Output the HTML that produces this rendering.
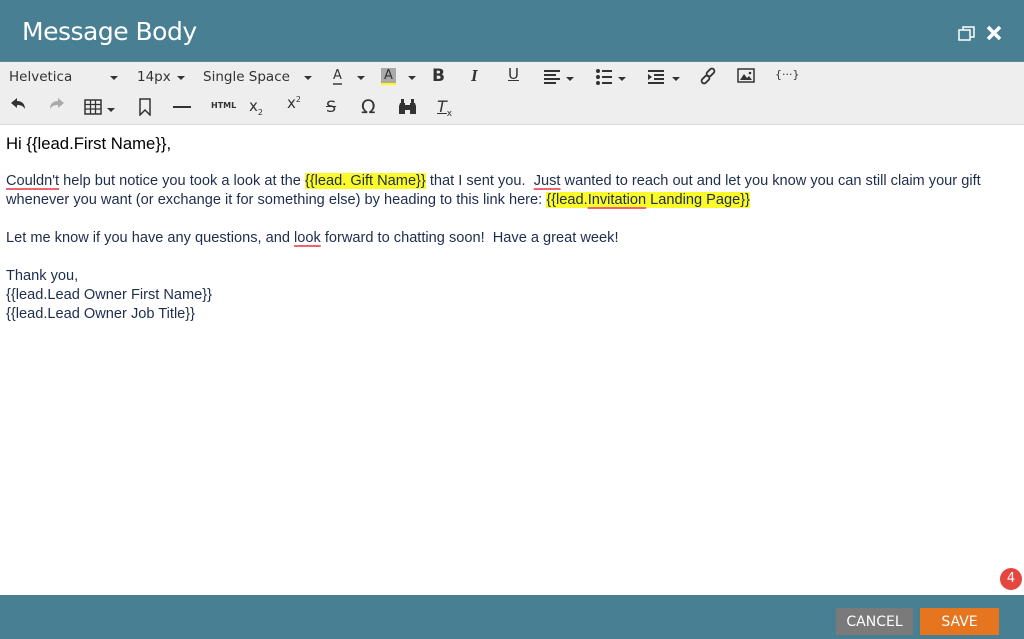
<!DOCTYPE html>
<html><head><style>
*{margin:0;padding:0;box-sizing:border-box}
body{width:1024px;height:639px;overflow:hidden;background:#fff;font-family:"Liberation Sans",sans-serif;position:relative}
.hdr{position:absolute;left:0;top:0;width:1024px;height:61px;background:#487f92}
.hdr .t{position:absolute;left:22px;top:17px;color:#fff;font-size:25px;font-family:"DejaVu Sans","Liberation Sans",sans-serif;font-weight:normal;letter-spacing:-0.5px}
.tb{position:absolute;left:0;top:61px;width:1024px;height:64px;background:#eeeeee;border-bottom:1px solid #dcdcdc;border-top:1px solid #5a8a9a}
.tb span{position:absolute;color:#333;font-family:"DejaVu Sans",sans-serif;font-size:13.5px}
.car{display:inline-block;width:0;height:0;border-left:4px solid transparent;border-right:4px solid transparent;border-top:4px solid #333;position:absolute}
.txt{position:absolute;left:6px;top:134px;font-size:14.6px;line-height:19px;color:#1f2d4d;width:1000px}
.hl{background:#fbfb2a}
.sp{text-decoration:underline;text-decoration-color:#f06470;text-decoration-thickness:2px;text-underline-offset:3px}
.ftr{position:absolute;left:0;top:595px;width:1024px;height:44px;background:#487f92}
.btn{position:absolute;top:608px;height:27px;color:#fff;font-size:14px;font-family:"DejaVu Sans",sans-serif;text-align:center;line-height:28px}
</style></head><body>
<div class="hdr"><div class="t">Message Body</div>
<svg style="position:absolute;left:958px;top:25px" width="18" height="18" viewBox="0 0 18 18" fill="none" stroke="#fff" stroke-width="1.5"><rect x="1" y="5" width="11" height="10"/><path d="M5 5V2h11v10h-4"/></svg>
<svg style="position:absolute;left:986px;top:25px" width="16" height="16" viewBox="0 0 16 16" stroke="#fff" stroke-width="3.5"><path d="M2 2l12 12M14 2L2 14"/></svg>
</div>
<div class="tb">
<span style="left:9px;top:7px">Helvetica</span><i class="car" style="left:110px;top:14px"></i>
<span style="left:137px;top:7px">14px</span><i class="car" style="left:177px;top:14px"></i>
<span style="left:203px;top:7px">Single Space</span><i class="car" style="left:304px;top:14px"></i>
<span style="left:333px;top:6px;font-size:13px;border-bottom:2px solid #666;line-height:15px">A</span><i class="car" style="left:357px;top:14px"></i>
<span style="left:381px;top:6px;font-size:13px;background:#aaa;padding:0 3px;border-bottom:2px solid #ff0;line-height:15px">A</span><i class="car" style="left:408px;top:14px"></i>
<span style="left:432px;top:4px;font-size:17px;font-weight:bold">B</span>
<span style="left:471px;top:4px;font-size:17px;font-style:italic;font-family:'Liberation Serif',serif;font-weight:bold">I</span>
<span style="left:508px;top:3px;font-size:15px;text-decoration:underline">U</span>
<svg style="position:absolute;left:543px;top:7px" width="36" height="16"><path d="M1 2h16M1 6h12M1 10h16M1 14h12" stroke="#333" stroke-width="2"/><path d="M23 8h8l-4 4z" fill="#333"/></svg>
<svg style="position:absolute;left:595px;top:7px" width="36" height="16"><circle cx="3" cy="2" r="2" fill="#333"/><circle cx="3" cy="8" r="2" fill="#333"/><circle cx="3" cy="14" r="2" fill="#333"/><path d="M7 2h10M7 8h10M7 14h10" stroke="#333" stroke-width="2"/><path d="M23 8h8l-4 4z" fill="#333"/></svg>
<svg style="position:absolute;left:647px;top:7px" width="36" height="16"><path d="M1 2h16M7 6h10M7 10h10M1 14h16" stroke="#333" stroke-width="2"/><path d="M1 5l4 3-4 3z" fill="#333"/><path d="M25 8h8l-4 4z" fill="#333"/></svg>
<svg style="position:absolute;left:699px;top:5px" width="18" height="18" viewBox="0 0 18 18" fill="none" stroke="#333" stroke-width="1.8"><rect x="9" y="1" width="5" height="9" rx="2.5" transform="rotate(45 11.5 5.5)"/><rect x="4" y="8" width="5" height="9" rx="2.5" transform="rotate(45 6.5 12.5)"/></svg>
<svg style="position:absolute;left:737px;top:6px" width="18" height="15"><rect x="1" y="1" width="16" height="13" fill="none" stroke="#333" stroke-width="1.5"/><path d="M3 12l4-6 3 4 2-2 3 4z" fill="#333"/><circle cx="13" cy="5" r="1.3" fill="#333"/></svg>
<span style="left:775px;top:6px;font-size:11px">{···}</span>
<svg style="position:absolute;left:10px;top:35px" width="16" height="14"><path d="M1 6l6-5v3c5 0 8 3 8 8-2-3-4-4-8-4v3z" fill="#333"/></svg>
<svg style="position:absolute;left:49px;top:35px" width="16" height="14"><path d="M15 6l-6-5v3c-5 0-8 3-8 8 2-3 4-4 8-4v3z" fill="#aaa"/></svg>
<svg style="position:absolute;left:84px;top:37px" width="36" height="16"><rect x="1" y="1" width="16" height="14" fill="none" stroke="#333" stroke-width="1.5"/><path d="M1 5.5h16M1 10h16M6.5 1v14M11.5 1v14" stroke="#333" stroke-width="1.3"/><path d="M23 9h8l-4 4z" fill="#333"/></svg>
<svg style="position:absolute;left:138px;top:36px" width="14" height="18"><path d="M2 1h10v16l-5-5-5 5z" fill="none" stroke="#333" stroke-width="1.5"/></svg>
<div style="position:absolute;left:173px;top:44px;width:18px;height:2px;background:#333"></div>
<span style="left:211px;top:39px;font-size:8px;font-weight:bold">HTML</span>
<span style="left:249px;top:35px;font-size:15px">x<sub style="font-size:8px">2</sub></span>
<span style="left:287px;top:32px;font-size:15px">x<sup style="font-size:8px">2</sup></span>
<span style="left:326px;top:35px;font-size:16px;text-decoration:line-through">S</span>
<span style="left:361px;top:34px;font-size:19px">Ω</span>
<svg style="position:absolute;left:398px;top:36px" width="19" height="17"><path d="M2 5h5v11H1V8zM12 5h5l1 3v8h-6zM3 1h3v4H3zM13 1h3v4h-3zM7 7h5v5H7z" fill="#333"/></svg>
<span style="left:437px;top:35px;font-size:16px;font-style:italic;text-decoration:underline">T<sub style="font-size:9px;font-style:normal">x</sub></span>
</div>
<div class="txt">
<div style="color:#000;font-size:16.7px;line-height:19px">Hi {{lead.First Name}},</div>
<div style="height:19px"></div>
<div><span class="sp">Couldn't</span> help but notice you took a look at the <span class="hl">{{lead. Gift Name}}</span> that I sent you.&nbsp; <span class="sp">Just</span> wanted to reach out and let you know you can still claim your gift<br>whenever you want (or exchange it for something else) by heading to this link here: <span class="hl">{{lead.<span class="sp">Invitation</span> Landing Page}}</span></div>
<div style="height:19px"></div>
<div>Let me know if you have any questions, and <span class="sp">look</span> forward to chatting soon!&nbsp; Have a great week!</div>
<div style="height:19px"></div>
<div>Thank you,</div>
<div>{{lead.Lead Owner First Name}}</div>
<div>{{lead.Lead Owner Job Title}}</div>
</div>
<div style="position:absolute;left:1000px;top:568px;width:22px;height:22px;border-radius:50%;background:#e5473f;color:#fff;font-size:13px;text-align:center;line-height:22px;font-family:'DejaVu Sans',sans-serif">4</div>
<div class="ftr"></div>
<div class="btn" style="left:836px;width:77px;background:#7a7a7a">CANCEL</div>
<div class="btn" style="left:920px;width:79px;background:#e5751f">SAVE</div>
</body></html>
